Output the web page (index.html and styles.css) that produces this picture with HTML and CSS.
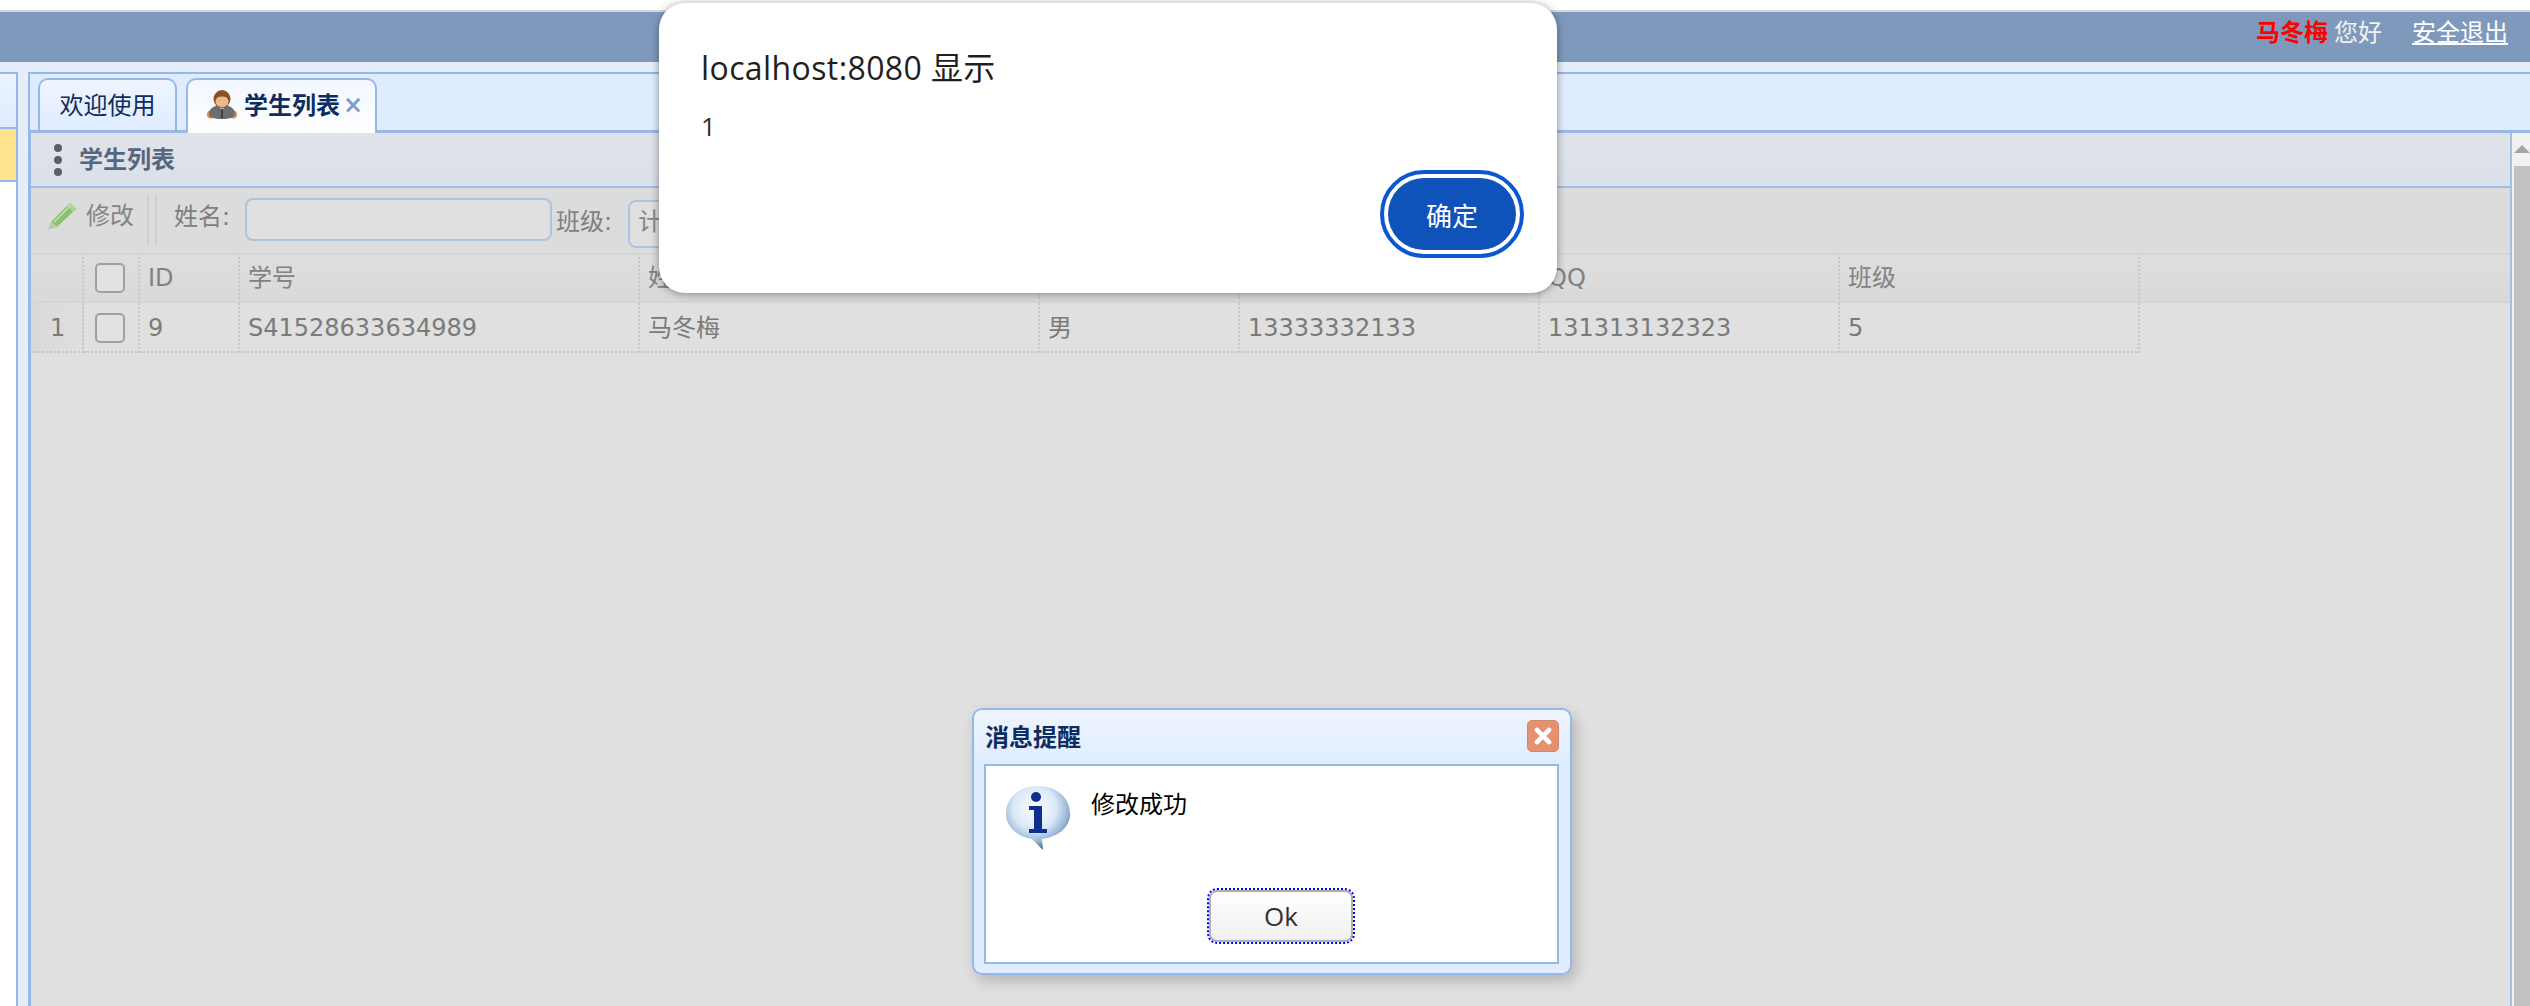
FILE: index.html
```html
<!DOCTYPE html>
<html lang="zh">
<head>
<meta charset="utf-8">
<title>学生列表</title>
<link rel="stylesheet" href="styles.css">
</head>
<body>
<header class="topbar">
  <span class="who">马冬梅</span><span class="hello">您好</span><a class="logout" href="#">安全退出</a>
</header>
<main class="main">
  <aside class="side">
    <div class="side-top"></div>
    <div class="side-selected"></div>
    <div class="side-rest"></div>
  </aside>
  <section class="work">
    <nav class="tabs">
      <div class="tab">欢迎使用</div>
      <div class="tab tab-on">
        <svg class="avatar" viewBox="0 0 30 30" width="30" height="30">
          <ellipse cx="4" cy="24.500" rx="4" ry="4" fill="#d98d45"/>
          <ellipse cx="26" cy="24.500" rx="4" ry="4" fill="#d98d45"/>
          <path d="M2 24c0-6 6-9 13-9s13 3 13 9c0 3-5 5-13 5S2 27 2 24z" fill="#6d6d6d"/>
          <path d="M11.500 15l3.500 6 3.500-6z" fill="#cfcfcf"/>
          <path d="M14 19h2v9h-2z" fill="#3f3f3f"/>
          <ellipse cx="15" cy="9" rx="8.500" ry="9" fill="#8a5326"/>
          <ellipse cx="15" cy="11.500" rx="6.500" ry="5.500" fill="#edb98a"/>
          <path d="M7 8c2-6 14-6 16 0-4-2-12-2-16 0z" fill="#8a5326"/>
        </svg>
        <strong class="tab-title">学生列表</strong>
        <span class="tab-x">×</span>
      </div>
    </nav>
    <div class="content">
      <div class="title-row">
        <span class="dots"><i></i><i></i><i></i></span>
        <span class="title-text">学生列表</span>
      </div>
      <div class="toolbar">
        <svg class="pencil" viewBox="0 0 28 28" width="28" height="28">
          <path d="M3 20L22 1l6 6L9 25z" fill="#8fc070"/>
          <path d="M22 1l6 6-3 3-6-6z" fill="#a9d48f"/>
          <path d="M3 20l6 5-9 3z" fill="#bccbae"/>
          <path d="M6 20L23 3" stroke="#c2e3ad" stroke-width="1.500"/>
        </svg>
        <span class="tool-btn">修改</span>
        <span class="sep"></span>
        <span class="sep sep-b"></span>
        <label class="lbl lbl-name">姓名:</label>
        <span class="field"></span>
        <label class="lbl lbl-class">班级:</label>
        <span class="select">计算机</span>
      </div>
      <div class="grid">
        <div class="cell head"></div>
        <div class="cell head box-cell"><span class="box"></span></div>
        <div class="cell head">ID</div>
        <div class="cell head">学号</div>
        <div class="cell head">姓名</div>
        <div class="cell head">性别</div>
        <div class="cell head">电话</div>
        <div class="cell head">QQ</div>
        <div class="cell head">班级</div>
        <div class="cell head filler"></div>

        <div class="cell row num">1</div>
        <div class="cell row box-cell"><span class="box"></span></div>
        <div class="cell row">9</div>
        <div class="cell row">S41528633634989</div>
        <div class="cell row">马冬梅</div>
        <div class="cell row">男</div>
        <div class="cell row">13333332133</div>
        <div class="cell row">131313132323</div>
        <div class="cell row">5</div>
      </div>
    </div>
    <div class="scrollbar"><span class="arrow"></span><span class="thumb"></span></div>
  </section>
</main>

<div class="alert">
  <div class="alert-title">localhost:8080 显示</div>
  <div class="alert-msg">1</div>
  <div class="alert-foot"><button class="alert-ok">确定</button></div>
</div>

<div class="msg">
  <div class="msg-head">
    <span class="msg-title">消息提醒</span>
    <span class="msg-close">
      <svg viewBox="0 0 32 32" width="30" height="30"><path d="M9.500 9.500l13 13M22.500 9.500l-13 13" stroke="#fff" stroke-width="5" stroke-linecap="round"/></svg>
    </span>
  </div>
  <div class="msg-body">
    <div class="msg-line">
      <svg class="info" viewBox="0 0 64 64" width="64" height="64">
        <defs>
          <radialGradient id="bub" cx="45%" cy="35%" r="62%">
            <stop offset="0" stop-color="#ffffff"/>
            <stop offset="0.55" stop-color="#d9e8f7"/>
            <stop offset="0.85" stop-color="#92b3d3"/>
            <stop offset="1" stop-color="#4f6f8f"/>
          </radialGradient>
        </defs>
        <path d="M32 0C14 0 0 11 0 28c0 13 12 23 26 25l11 11-1-11c16-2 28-12 28-25C64 11 50 0 32 0z" fill="url(#bub)"/>
        <circle cx="30" cy="11" r="5" fill="#0f2f8f"/>
        <path d="M23 20h13v23h5v4H23v-4h5V24h-5z" fill="#0f2f8f"/>
      </svg>
      <span class="msg-text">修改成功</span>
    </div>
    <div class="msg-foot"><button class="msg-ok">Ok</button></div>
  </div>
</div>
</body>
</html>
```
FILE: styles.css
```css
* { box-sizing: border-box; }
html, body { margin: 0; height: 1006px; overflow: hidden; background: #fff; }
body {
  padding-top: 10px;
  font-family: "DejaVu Sans", "Noto Sans CJK SC", sans-serif;
  font-size: 24px;
  line-height: 1.2;
}

.topbar {
  height: 52px;
  background: #7f99bd;
  border-top: 2px solid #d6dadf;
  display: flex;
  justify-content: flex-end;
  align-items: flex-start;
  padding: 5px 22px 0 0;
  color: #fff;
  font-family: "Noto Sans CJK SC", sans-serif;
}
.who { color: #f00; font-weight: 700; margin-right: -1px; }
.hello { margin-left: 7px; color: #f2f2f2; }
.logout { margin-left: 30px; color: #fff; text-decoration: underline; }

.main {
  height: 944px;
  background: #e6eef9;
  padding-top: 10px;
  display: flex;
  gap: 10px;
}
.side {
  width: 18px;
  height: 934px;
  border-top: 2px solid #95b8e7;
  border-right: 2px solid #95b8e7;
  display: flex;
  flex-direction: column;
}
.side-top { height: 53px; background: linear-gradient(#eaf2ff, #e0ecff); }
.side-selected { height: 55px; background: #ffe48d; border-top: 2px solid #95b8e7; border-bottom: 2px solid #95b8e7; }
.side-rest { flex: 1; background: #fff; }

.work {
  flex: 1;
  min-width: 0;
  height: 934px;
  border-top: 2px solid #95b8e7;
  border-left: 2px solid #95b8e7;
  display: flex;
  flex-direction: column;
  position: relative;
}
.tabs {
  height: 59px;
  flex: none;
  background: #dfecff;
  border-bottom: 3px solid #98b9e6;
  padding: 4px 0 0 8px;
  display: flex;
  gap: 9px;
  align-items: flex-start;
}
.tab {
  width: 139px;
  height: 52px;
  padding-top: 2px;
  border: 2px solid #95b8e7;
  border-bottom: 0;
  border-radius: 10px 10px 0 0;
  background: linear-gradient(#eff5ff, #dfecff);
  color: #0e2d5f;
  display: flex;
  align-items: center;
  justify-content: center;
}
.tab-on {
  width: 191px;
  height: 55px;
  background: linear-gradient(#f2f7ff, #fff);
  justify-content: flex-start;
  padding: 0 0 3px 19px;
}
.avatar { flex: none; }
.tab-title { margin-left: 7px; padding-top: 2px; font-weight: 700; color: #0e2d5f; white-space: nowrap; }
.tab-x {
  margin-left: 3px;
  color: #7f9ccb;
  font-size: 24px;
  font-weight: 700;
  line-height: 1;
}

.content {
  flex: 1;
  min-height: 0;
  margin-right: 18px;
  border-left: 1px solid #98b9e6;
  border-right: 2px solid #a6bfe0;
  background: #e0e0e0;
  color: #777;
}
.title-row {
  height: 55px;
  padding-top: 2px;
  background: linear-gradient(#e0e3e9, #dae0ea);
  border-bottom: 2px solid #a3bde0;
  display: flex;
  align-items: center;
  padding-left: 23px;
}
.dots { display: flex; flex-direction: column; gap: 4px; width: 8px; margin-top: -2px; }
.dots i { display: block; width: 8px; height: 8px; border-radius: 50%; background: #5a5f66; }
.title-text { margin-left: 17px; font-weight: 700; color: #57667f; }

.toolbar {
  height: 65px;
  background: #dcdcdc;
  display: flex;
  align-items: flex-start;
  padding-left: 17px;
  color: #858585;
}
.pencil { margin-top: 14px; flex: none; }
.tool-btn { margin: 14px 0 0 10px; }
.sep { width: 2px; height: 51px; margin: 6px 0 0 13px; background: #cfcfcf; flex: none; }
.sep-b { margin-left: 6px; }
.lbl { white-space: nowrap; color: #7f7f7f; }
.lbl-name { margin: 15px 0 0 17px; }
.lbl-class { margin: 20px 0 0 4px; }
.field {
  width: 307px;
  height: 43px;
  margin: 10px 0 0 15px;
  border: 2px solid #adc3e1;
  border-radius: 8px;
  background: #e0e0e0;
  flex: none;
}
.select {
  width: 160px;
  height: 48px;
  margin: 12px 0 0 16px;
  border: 2px solid #adc3e1;
  border-radius: 8px;
  padding: 6px 0 0 8px;
  background: #e0e0e0;
  flex: none;
  overflow: hidden;
  white-space: nowrap;
}

.grid {
  display: grid;
  grid-template-columns: 53px 56px 100px 400px 400px 200px 300px 300px 300px 1fr;
  grid-template-rows: 50px 50px;
}
.cell {
  padding-left: 8px;
  display: flex;
  align-items: center;
  white-space: nowrap;
  border-right: 2px dotted #c6c6c6;
  color: #7a7a7a;
}
.head {
  background: linear-gradient(#dedede, #d9d9d9);
  border-top: 2px solid #d5d5d5;
  border-bottom: 2px solid #d5d5d5;
  color: #828282;
}
.filler { border-right: 0; }
.row { border-bottom: 2px dotted #c6c6c6; padding-top: 2px; }
.num { background: linear-gradient(90deg, #d9d9d9, #dfdfdf); padding-left: 19px; }
.box-cell { padding-left: 11px; }
.box {
  display: block;
  width: 30px;
  height: 30px;
  border: 2px solid #a0a0a0;
  border-radius: 5px;
  background: #e2e2e2;
}

.scrollbar {
  position: absolute;
  right: 0;
  top: 59px;
  bottom: 0;
  width: 18px;
  background: #f1f1f1;
}
.arrow {
  position: absolute;
  right: 0;
  top: 12px;
  width: 0;
  height: 0;
  border-left: 8px solid transparent;
  border-right: 8px solid transparent;
  border-bottom: 8px solid #a3a3a3;
}
.thumb {
  position: absolute;
  left: 2px;
  right: 0;
  top: 33px;
  bottom: 0;
  background: #c1c1c1;
}

.alert {
  position: absolute;
  z-index: 5;
  left: 659px;
  top: 3px;
  width: 898px;
  height: 290px;
  background: #fff;
  border-radius: 26px;
  box-shadow: 0 1px 8px rgba(0, 0, 0, 0.4);
  padding: 43px 33px 0 42px;
  font-family: "Open Sans", "Noto Sans CJK SC", sans-serif;
  color: #1f1f1f;
}
.alert-title { font-size: 32px; line-height: 44px; letter-spacing: 0.400px; }
.alert-msg { font-size: 26px; line-height: 36px; margin-top: 18px; color: #3c2a1e; }
.alert-foot { display: flex; justify-content: flex-end; margin-top: 26px; }
.alert-ok {
  width: 128px;
  height: 72px;
  margin: 8px;
  border: 0;
  border-radius: 36px;
  background: #0f52b9;
  color: #fff;
  font: 26px "Noto Sans CJK SC", sans-serif;
  outline: 4px solid #0b57d0;
  outline-offset: 4px;
}

.msg {
  position: absolute;
  z-index: 4;
  left: 972px;
  top: 708px;
  width: 600px;
  height: 267px;
  background: linear-gradient(#eff5ff, #e0ecff 20%);
  border: 2px solid #95b8e7;
  border-radius: 10px;
  box-shadow: 4px 6px 14px rgba(0, 0, 0, 0.2);
  padding: 0 11px 0 10px;
  display: flex;
  flex-direction: column;
}
.msg-head {
  height: 54px;
  padding-bottom: 2px;
  display: flex;
  align-items: center;
  justify-content: space-between;
}
.msg-title { font-weight: 700; color: #0e2d5f; font-family: "Noto Sans CJK SC", sans-serif; margin-left: 1px; }
.msg-close {
  width: 32px;
  height: 32px;
  border-radius: 5px;
  background: #e5906f;
  border: 1px solid #d1876a;
  display: flex;
  align-items: center;
  justify-content: center;
  flex: none;
}
.msg-body {
  height: 200px;
  border: 2px solid #95b8e7;
  background: #fff;
  padding: 20px 0 0 20px;
}
.msg-line { display: flex; align-items: flex-start; height: 102px; }
.info { flex: none; }
.msg-text { margin: 3px 0 0 21px; color: #000; font-family: "Noto Sans CJK SC", sans-serif; }
.msg-foot { display: flex; justify-content: center; margin-left: -20px; padding-left: 19px; }
.msg-ok {
  width: 144px;
  height: 52px;
  margin-top: 2px;
  border: 2px solid #b0b0b0;
  border-radius: 8px;
  background: linear-gradient(#fff, #f0f0f0);
  color: #333;
  font: 26px "Open Sans", sans-serif;
  outline: 2px dotted #00f;
  outline-offset: 0;
}
```
